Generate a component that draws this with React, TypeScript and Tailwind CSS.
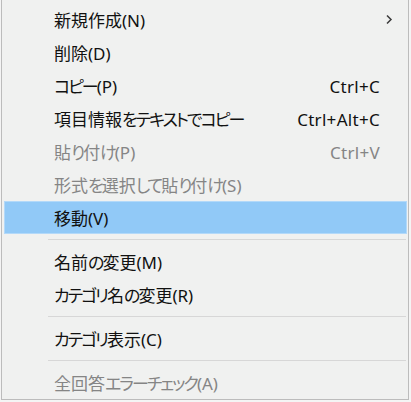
import React from 'react';

type Item =
  | { kind: 'sep' }
  | { kind: 'item'; label: string; shortcut?: string; disabled?: boolean; active?: boolean; submenu?: boolean };

const items: Item[] = [
  { kind: 'item', label: '新規作成(N)', submenu: true },
  { kind: 'item', label: '削除(D)' },
  { kind: 'item', label: 'コピー(P)', shortcut: 'Ctrl+C' },
  { kind: 'item', label: '項目情報をテキストでコピー', shortcut: 'Ctrl+Alt+C' },
  { kind: 'item', label: '貼り付け(P)', shortcut: 'Ctrl+V', disabled: true },
  { kind: 'item', label: '形式を選択して貼り付け(S)', disabled: true },
  { kind: 'item', label: '移動(V)', active: true },
  { kind: 'sep' },
  { kind: 'item', label: '名前の変更(M)' },
  { kind: 'item', label: 'カテゴリ名の変更(R)' },
  { kind: 'sep' },
  { kind: 'item', label: 'カテゴリ表示(C)' },
  { kind: 'sep' },
  { kind: 'item', label: '全回答エラーチェック(A)', disabled: true },
];

// kana in the original UI font are much narrower than kanji, so tighten them
const Label = ({ text }: { text: string }) => {
  const parts = text.split(/([\u3040-\u30ff]+)/).filter(Boolean);
  return (
    <>
      {parts.map((p, i) =>
        /[\u3040-\u30ff]/.test(p) ? (
          <span key={i} className="tracking-[-2px]">{p}</span>
        ) : (
          <span key={i}>{p}</span>
        )
      )}
    </>
  );
};

const Chevron = () => (
  <svg width="8" height="11" viewBox="0 0 8 11" fill="none" aria-hidden="true">
    <path d="M2 1.5L6 5.5L2 9.5" stroke="#3a3a3a" strokeWidth="1.5" />
  </svg>
);

export default function App() {
  return (
    <div className="w-[411px] h-[402px] bg-[#f4f4f4] overflow-hidden">
      <div className="ml-[1px] w-[408px] h-[400px] bg-[#f0f1f0] border-x border-b border-[#bcbcbc] pt-[3px] pl-[2px] pr-[1px] text-[17px] leading-none font-['Noto_Sans','Noto_Sans_CJK_JP',sans-serif] [font-feature-settings:'palt']">
        {items.map((it, i) =>
          it.kind === 'sep' ? (
            <div key={i} className="h-[11px] flex items-center pl-[44px] pr-[1px]">
              <div className="h-px w-full bg-[#d7d7d7]" />
            </div>
          ) : (
            <div
              key={i}
              className={
                'h-[33px] flex items-center pl-[49px] pr-[13px] pt-[2px] border ' +
                (it.active ? 'bg-[#91c9f7] border-[#b3d9f9]' : 'border-transparent') +
                (it.disabled ? ' text-[#858585]' : ' text-[#111111]')
              }
            >
              <span className="flex-1">
                <Label text={it.label} />
              </span>
              {it.shortcut && <span className="mr-[13px] tracking-[0.3px]">{it.shortcut}</span>}
              {it.submenu && (
                <span className="flex items-center -mt-[2px]">
                  <Chevron />
                </span>
              )}
            </div>
          )
        )}
      </div>
    </div>
  );
}
